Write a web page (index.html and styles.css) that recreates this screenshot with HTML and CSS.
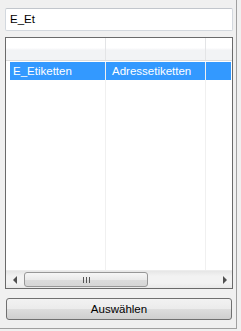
FILE: index.html
```html
<html>
  <head>
    <meta charset="utf-8" />
    <title>Auswahl</title>
    <link rel="stylesheet" href="styles.css">
  </head>
  <body>
    <div class="window">
      <div class="search">E_Et</div>

      <div class="list">
        <div class="head">
          <div class="hc c1"></div>
          <div class="hc c2"></div>
          <div class="hc c3"></div>
        </div>
        <div class="rows">
          <div class="col c1"><div class="cell sel">E_Etiketten</div></div>
          <div class="col c2"><div class="cell sel">Adressetiketten</div></div>
          <div class="col c3"><div class="cell sel"></div></div>
        </div>
        <div class="hscroll">
          <div class="arrow left"></div>
          <div class="track">
            <div class="thumb"><span class="grip"></span></div>
          </div>
          <div class="arrow right"></div>
        </div>
      </div>

      <button class="button">Auswählen</button>
    </div>
  </body>
</html>
```

FILE: styles.css
```css
html, body {
  margin: 0;
  height: 100%;
}

body {
  background-color: #f0f0f0;
  font-family: "Liberation Sans", Arial, sans-serif;
  font-size: 11px;
  color: #000000;
}

.window {
  box-sizing: border-box;
  width: 237px;
  height: 329px;
  padding: 8px 4px 8px 5px;
  border-right: 1px solid #a0a0a0;
  border-bottom: 1px solid #a0a0a0;
  display: flex;
  flex-direction: column;
  gap: 6px;
}

.search {
  box-sizing: border-box;
  width: 228px;
  height: 23px;
  padding: 0 4px;
  line-height: 21px;
  font-size: 11.5px;
  background-color: #ffffff;
  border: 1px solid #d3d8de;
  border-top-color: #c2c6cc;
  border-radius: 2px;
}

.list {
  box-sizing: border-box;
  width: 228px;
  height: 253px;
  background-color: #ffffff;
  border: 1px solid #6a6a6a;
  display: flex;
  flex-direction: column;
}

.head {
  display: flex;
  height: 22px;
  border-bottom: 1px solid #dcdcdc;
  background: linear-gradient(#ffffff 0, #ffffff 45%, #f2f3f5 55%, #f2f3f5 100%);
}

.hc {
  border-right: 1px solid #e3e4e6;
}

.c1 { width: 99px; flex: none; }
.c2 { width: 99px; flex: none; }
.c3 { flex: 1 1 0; border-right: none; }

.rows {
  flex: 1 1 0;
  display: flex;
  padding-top: 1px;
}

.col {
  border-right: 1px solid #f0f0f0;
}
.col.c1 {
  width: 95px;
  padding-left: 4px;
}
.col.c3 {
  border-right: none;
  padding-right: 1px;
}

.cell {
  height: 18px;
  line-height: 18px;
  font-size: 11.5px;
  white-space: nowrap;
  overflow: hidden;
}
.c1 .cell { padding-left: 3px; }
.c2 .cell { padding-left: 6px; }

.sel {
  background-color: #3399ff;
  color: #ffffff;
}

.hscroll {
  height: 17px;
  display: flex;
  align-items: center;
  background: linear-gradient(#e6e6e6, #f2f2f2 30%, #f2f2f2 70%, #e9e9e9);
  border-top: 1px solid #ececec;
}

.arrow {
  width: 17px;
  height: 17px;
  display: flex;
  align-items: center;
  justify-content: center;
}
.arrow::before {
  content: "";
  width: 0;
  height: 0;
  border-top: 4px solid transparent;
  border-bottom: 4px solid transparent;
}
.arrow.left::before {
  border-right: 4px solid #505050;
  margin-left: 1px;
}
.arrow.right::before {
  border-left: 4px solid #505050;
  margin-left: 3px;
}

.track {
  flex: 1 1 0;
  height: 17px;
  display: flex;
  align-items: center;
}

.thumb {
  box-sizing: border-box;
  width: 124px;
  height: 15px;
  margin-left: 1px;
  border: 1px solid #979797;
  border-radius: 3px;
  background: linear-gradient(#f6f6f6, #eaeaea 50%, #dcdcdc 51%, #d6d6d6);
  display: flex;
  align-items: center;
  justify-content: center;
}

.grip {
  width: 5px;
  height: 6px;
  border-left: 1px solid #555555;
  border-right: 1px solid #555555;
  background: linear-gradient(90deg, transparent 2px, #555555 2px, #555555 3px, transparent 3px);
}

.button {
  box-sizing: border-box;
  width: 226px;
  height: 22px;
  margin: 3px 0 0 1px;
  padding: 0;
  font-family: "Liberation Sans", Arial, sans-serif;
  font-size: 11.5px;
  color: #000000;
  border: 1px solid #707070;
  border-radius: 3px;
  background: linear-gradient(#f2f2f2, #ebebeb 50%, #dddddd 51%, #cfcfcf);
  cursor: pointer;
}
```
